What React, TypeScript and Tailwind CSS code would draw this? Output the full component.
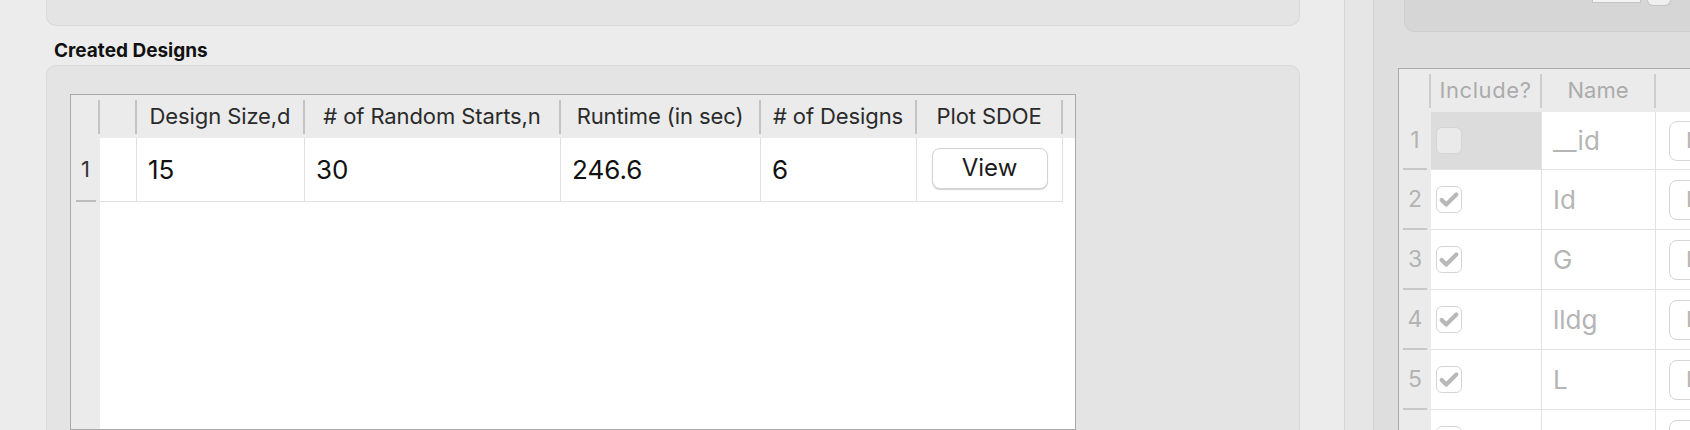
import { Check } from 'lucide-react';

type Column = {
  label: string;
  width: string;
};

const designColumns: Column[] = [
  { label: '', width: 'w-[37px]' },
  { label: 'Design Size,d', width: 'w-[168px]' },
  { label: '# of Random Starts,n', width: 'w-[256px]' },
  { label: 'Runtime (in sec)', width: 'w-[200px]' },
  { label: '# of Designs', width: 'w-[156px]' },
  { label: 'Plot SDOE', width: 'w-[146px]' },
];

const designRow = ['', '15', '30', '246.6', '6'];

const inputRows = [
  { name: '__id', include: false, height: 'h-[58px]' },
  { name: 'Id', include: true, height: 'h-[60px]' },
  { name: 'G', include: true, height: 'h-[60px]' },
  { name: 'lldg', include: true, height: 'h-[60px]' },
  { name: 'L', include: true, height: 'h-[60px]' },
  { name: 'H', include: true, height: 'h-[60px]' },
];

function HeaderDivider({ light }: { light?: boolean }) {
  return <span className={`h-[34px] w-[2px] shrink-0 ${light ? 'bg-[#cdcdcd]' : 'bg-[#c4c4c4]'}`} />;
}

function DesignsTable() {
  return (
    <div className="flex h-full w-[1006px] flex-col border border-[#a9a9a9] bg-white">
      <div className="flex h-[43px] shrink-0 items-center bg-[#ebebeb] text-[22px] tracking-[-0.1px] text-[#2a2a2a]">
        <div className="flex w-[29px] shrink-0 justify-end">
          <HeaderDivider />
        </div>
        {designColumns.map((col) => (
          <div key={col.label || 'blank'} className={`flex shrink-0 items-center ${col.width}`}>
            <span className="flex-1 text-center whitespace-nowrap">{col.label}</span>
            <HeaderDivider />
          </div>
        ))}
      </div>

      <div className="flex flex-1">
        <div className="flex w-[29px] shrink-0 flex-col bg-[#ebebeb]">
          <div className="flex h-[64px] flex-col items-center">
            <span className="flex flex-1 items-center text-[22px] text-[#333]">1</span>
            <span className="h-[2px] w-[20px] bg-[#bdbdbd]" />
          </div>
        </div>

        <div className="flex-1">
          <div className="flex h-[64px] text-[26px] text-[#111]">
            {designRow.map((value, i) => (
              <div
                key={i}
                className={`flex shrink-0 items-center border-r border-b border-[#e0e0e0] pl-[11px] ${designColumns[i].width}`}
              >
                {value}
              </div>
            ))}
            <div className="flex w-[146px] shrink-0 items-center justify-center border-r border-b border-[#e0e0e0]">
              <button className="mt-[-3px] h-[41px] w-[116px] rounded-[8px] border border-[#d3d3d3] bg-white text-[24px] text-[#1c1c1c] shadow-[0_1px_1px_rgba(0,0,0,0.18)]">
                View
              </button>
            </div>
          </div>
        </div>
      </div>
    </div>
  );
}

function InputsTable() {
  return (
    <div className="flex h-full flex-col border-t border-l border-[#a9a9a9] bg-white">
      <div className="flex h-[43px] shrink-0 items-center bg-[#ebebeb] text-[22px] text-[#ababab]">
        <div className="flex w-[32px] shrink-0 justify-end">
          <HeaderDivider light />
        </div>
        <div className="flex w-[111px] shrink-0 items-center">
          <span className="flex-1 text-center tracking-[0.6px]">Include?</span>
          <HeaderDivider light />
        </div>
        <div className="flex w-[114px] shrink-0 items-center">
          <span className="flex-1 text-center">Name</span>
          <HeaderDivider light />
        </div>
        <div className="flex w-[130px] shrink-0 items-center">
          <span className="flex-1 text-center">Type</span>
        </div>
      </div>

      <div className="flex flex-1">
        <div className="flex w-[32px] shrink-0 flex-col bg-[#ebebeb]">
          {inputRows.map((row, i) => (
            <div key={row.name} className={`flex shrink-0 flex-col items-center ${row.height}`}>
              <span className="flex flex-1 items-center text-[23px] text-[#b3b3b3]">{i + 1}</span>
              <span className="h-[2px] w-[24px] bg-[#c8c8c8]" />
            </div>
          ))}
        </div>

        <div className="flex-1">
          {inputRows.map((row) => (
            <div key={row.name} className={`flex shrink-0 ${row.height}`}>
              <div
                className={`flex w-[111px] shrink-0 items-center border-r border-b border-[#e2e2e2] pl-[5px] ${
                  row.include ? 'bg-white' : 'bg-[#dcdcdc]'
                }`}
              >
                <span
                  className={`flex h-[27px] w-[26px] items-center justify-center rounded-[6px] border border-[#d5d5d5] ${
                    row.include ? 'bg-white' : 'bg-[#eaeaea]'
                  }`}
                >
                  {row.include && <Check size={22} strokeWidth={4.5} className="text-[#b8b8b8]" />}
                </span>
              </div>
              <div className="flex w-[114px] shrink-0 items-center border-r border-b border-[#e2e2e2] pl-[11px] text-[26px] text-[#b5b5b5]">
                {row.name}
              </div>
              <div className="flex flex-1 items-center border-b border-[#e2e2e2] pl-[13px]">
                <div className="flex h-[40px] w-[150px] shrink-0 items-center rounded-[8px] border border-[#d6d6d6] bg-white pl-[16px] text-[22px] text-[#b5b5b5]">
                  Input
                </div>
              </div>
            </div>
          ))}
        </div>
      </div>
    </div>
  );
}

export default function App() {
  return (
    <div className="flex h-[430px] w-[1690px] overflow-hidden bg-[#ececec] font-['Inter','Noto_Sans',sans-serif]">
      <div className="flex w-[1300px] shrink-0 flex-col pl-[46px]">
        <div className="h-[26px] shrink-0 rounded-b-[10px] border-x border-b border-[#d9d9d9] bg-[#e4e4e4]" />
        <div className="h-[39px] shrink-0 pt-[15px] pl-[8px] text-[19px] leading-[20px] font-bold text-[#111]">
          Created Designs
        </div>
        <div className="flex-1 rounded-t-[10px] border-x border-t border-[#d9d9d9] bg-[#e4e4e4] pt-[28px] pl-[23px]">
          <DesignsTable />
        </div>
      </div>

      <div className="w-[44px] shrink-0" />

      <div className="flex flex-1 border-l border-[#d6d6d6]">
        <div className="w-[29px] shrink-0 border-r border-[#d4d4d4] bg-[#e6e6e6]" />
        <div className="flex flex-1 flex-col bg-[#dedede]">
          <div className="ml-[30px] flex h-[32px] shrink-0 items-start gap-[6px] rounded-bl-[10px] border-b border-l border-[#cfcfcf] bg-[#d6d6d6] pl-[187px]">
            <span className="h-[3px] w-[49px] border-x border-b border-[#c4c4c4] bg-[#f4f4f4]" />
            <span className="h-[6px] w-[24px] rounded-b-full border-x border-b border-[#c4c4c4] bg-[#efefef]" />
          </div>
          <div className="flex-1 pt-[36px] pl-[24px]">
            <InputsTable />
          </div>
        </div>
      </div>
    </div>
  );
}
